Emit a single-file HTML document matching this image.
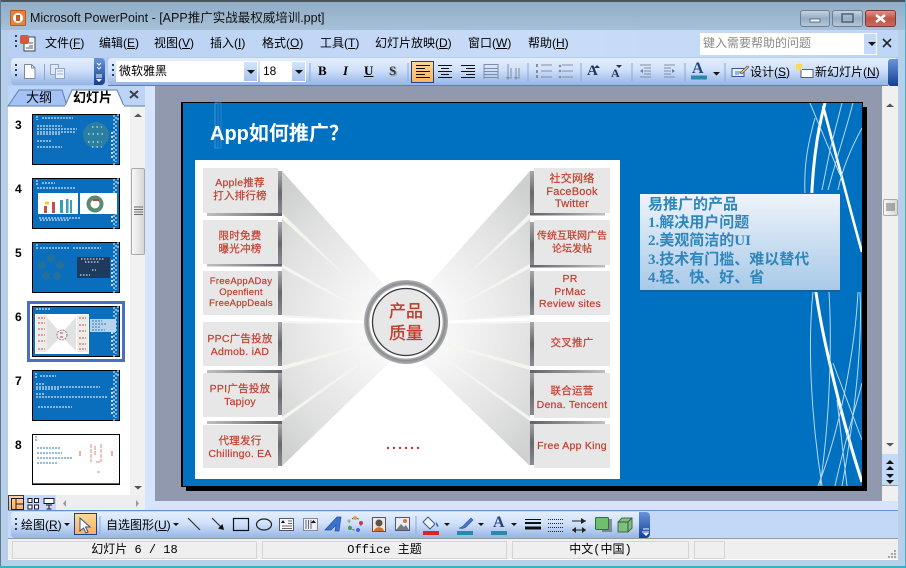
<!DOCTYPE html>
<html><head><meta charset="utf-8">
<style>
html,body{margin:0;padding:0;width:906px;height:568px;overflow:hidden;background:#b7cfe8}
*{box-sizing:border-box}
#r{position:relative;width:906px;height:568px;overflow:hidden;font-family:"Liberation Sans","Noto Sans CJK SC",sans-serif;font-size:12px;color:#000}
.a{position:absolute}
.t{position:absolute;white-space:nowrap;line-height:14px}
.m{position:absolute;top:36px;white-space:nowrap;line-height:14px;font-size:12px}
.rt{position:absolute;color:#c23e2e;text-align:center;white-space:nowrap;font-size:10.5px;line-height:12.6px;width:80px;letter-spacing:.25px;-webkit-text-stroke:.2px #c23e2e}
.st{position:absolute;background:#efefef;border:1px solid #d5d5d5;top:541px;height:18px;font-family:"Liberation Mono","Noto Sans CJK SC",monospace;font-size:12px;text-align:center;line-height:16px}
</style></head><body><div id="r">
<div class="a" style="left:0;top:0;width:906px;height:30px;background:linear-gradient(#8fabc6,#a6c0d7)"></div>
<div class="a" style="left:0;top:0;width:906px;height:2px;background:#4a5560"></div>
<div class="a" style="left:0;top:30px;width:8px;height:530px;background:#b7cfe8"></div>
<div class="a" style="left:0;top:0;width:1px;height:568px;background:#5f7a90"></div>
<div class="a" style="left:898px;top:30px;width:8px;height:530px;background:#b7cfe8"></div>
<div class="a" style="left:905px;top:0;width:1px;height:568px;background:#45b0c8"></div>
<div class="a" style="left:8px;top:30px;width:890px;height:27px;background:linear-gradient(90deg,#b8d0f2,#c9dcf8 60%,#c0d6f6)"></div>
<div class="a" style="left:8px;top:57px;width:890px;height:29px;background:#b3ccef"></div>
<div class="a" style="left:11px;top:58px;width:94px;height:27px;border-radius:4px;background:linear-gradient(#e4effd,#cfe0f9 45%,#95b4e4)"></div>
<div class="a" style="left:108px;top:58px;width:790px;height:27px;border-radius:4px;background:linear-gradient(#e4effd,#cfe0f9 45%,#95b4e4)"></div>
<div class="a" style="left:94px;top:58px;width:11px;height:27px;border-radius:0 4px 4px 0;background:linear-gradient(#6a95d8,#143f96)"></div>
<div class="a" style="left:888px;top:59px;width:10px;height:27px;border-radius:3px 0 0 3px;background:linear-gradient(#6a95d8,#143f96)"></div>
<div class="a" style="left:108px;top:85px;width:780px;height:1px;background:#5d7fb5"></div>
<!-- combos -->
<div class="a" style="left:116px;top:61px;width:142px;height:21px;background:#fff"></div>
<div class="a" style="left:244px;top:62px;width:13px;height:19px;background:linear-gradient(#d5e4f9,#a7c3ec)"></div>
<div class="a" style="left:260px;top:61px;width:46px;height:21px;background:#fff"></div>
<div class="a" style="left:292px;top:62px;width:13px;height:19px;background:linear-gradient(#d5e4f9,#a7c3ec)"></div>
<div class="a" style="left:411px;top:61px;width:23px;height:22px;background:linear-gradient(#ffd79a,#f9b25f);border:1px solid #1b3f8f"></div>
<!-- help box -->
<div class="a" style="left:700px;top:33px;width:177px;height:22px;background:#fff"></div>
<div class="a" style="left:864px;top:34px;width:12px;height:20px;background:#c4daf8"></div>
<!-- workspace -->
<div class="a" style="left:155px;top:86px;width:727px;height:415px;background:#9099ad"></div>
<div class="a" style="left:145px;top:86px;width:10px;height:424px;background:#d6e5fb"></div>
<div class="a" style="left:155px;top:501px;width:743px;height:9px;background:#d6e5fb"></div>
<div class="a" style="left:882px;top:86px;width:16px;height:415px;background:#f0f0f0"></div>
<div class="a" style="left:882px;top:454px;width:16px;height:32px;background:#c4daf8;border-bottom:1px solid #7f9fd5"></div>
<div class="a" style="left:883px;top:199px;width:15px;height:17px;border:1px solid #a9a9a9;border-radius:2px;background:linear-gradient(90deg,#f7f7f7,#d8d8d8)"></div>
<!-- left pane -->
<div class="a" style="left:8px;top:86px;width:137px;height:21px;background:#bcd5f6"></div>
<div class="a" style="left:8px;top:106px;width:122px;height:389px;background:#fff"></div>
<div class="a" style="left:130px;top:106px;width:15px;height:389px;background:#f1f1f1"></div>
<div class="a" style="left:131px;top:168px;width:14px;height:87px;border:1px solid #a9a9a9;border-radius:2px;background:linear-gradient(90deg,#f8f8f8,#d6d6d6)"></div>
<div class="a" style="left:8px;top:495px;width:48px;height:15px;background:#c4daf8"></div>
<div class="a" style="left:56px;top:495px;width:89px;height:15px;background:#eeeeee"></div>
<div class="a" style="left:8px;top:495px;width:16px;height:16px;background:linear-gradient(#ffd79a,#f9b25f);border:1px solid #1b3f8f"></div>
<!-- draw toolbar -->
<div class="a" style="left:8px;top:510px;width:890px;height:1px;background:#6a90d4"></div>
<div class="a" style="left:8px;top:511px;width:890px;height:27px;background:#c3d8f7"></div>
<div class="a" style="left:11px;top:512px;width:639px;height:26px;border-radius:4px;background:linear-gradient(#e4effd,#cfe0f9 45%,#95b4e4)"></div>
<div class="a" style="left:639px;top:512px;width:11px;height:26px;border-radius:0 4px 4px 0;background:linear-gradient(#6a95d8,#143f96)"></div>
<div class="a" style="left:74px;top:513px;width:23px;height:22px;background:linear-gradient(#ffd79a,#f9b25f);border:1px solid #1b3f8f"></div>
<!-- status -->
<div class="a" style="left:8px;top:538px;width:890px;height:22px;background:#efefef;border-top:1px solid #9a9a9a"></div>
<div class="a" style="left:8px;top:559px;width:890px;height:1px;background:#fff"></div>
<div class="a" style="left:0;top:566px;width:906px;height:2px;background:#38b0c8"></div>
<div class="st" style="left:12px;width:245px">幻灯片 6 / 18</div>
<div class="st" style="left:262px;width:245px">Office 主题</div>
<div class="st" style="left:512px;width:177px">中文(中国)</div>
<div class="st" style="left:694px;width:31px"></div>

<!-- window buttons -->
<div class="a" style="left:800px;top:10px;width:30px;height:17px;border:1px solid #6f7f90;border-radius:3px;background:linear-gradient(#c4d3e2,#96adc4 50%,#b3c8da)"></div>
<div class="a" style="left:832px;top:10px;width:31px;height:17px;border:1px solid #6f7f90;border-radius:3px;background:linear-gradient(#c4d3e2,#96adc4 50%,#b3c8da)"></div>
<div class="a" style="left:865px;top:10px;width:31px;height:17px;border:1px solid #7a3a35;border-radius:3px;background:linear-gradient(#dd9488,#bd5548 50%,#cb6a5c)"></div>

<!-- SLIDE -->
<div class="a" style="left:186px;top:107px;width:681px;height:384px;background:#000"></div>
<div class="a" style="left:181px;top:102px;width:682px;height:385px;background:#0070c0;border:1px solid #000;border-width:1px 1px 1px 2px"></div>

<svg class="a" style="left:0;top:0" width="906" height="568" viewBox="0 0 906 568" fill="none">
<defs>
<clipPath id="sc"><rect x="183" y="103" width="679" height="383"/></clipPath>
<radialGradient id="bm" gradientUnits="userSpaceOnUse" cx="406" cy="322" r="180">
<stop offset=".25" stop-color="#f7f7f7"/><stop offset=".7" stop-color="#e2e2e2"/><stop offset="1" stop-color="#cdd0cf"/></radialGradient>
<radialGradient id="rg" cx=".5" cy=".5" r=".5"><stop offset=".84" stop-color="#d5d5d5"/><stop offset=".92" stop-color="#8a8c90"/><stop offset="1" stop-color="#b0b2b5"/></radialGradient>
<linearGradient id="sl" x1="0" x2="0" y1="0" y2="1"><stop offset="0" stop-color="#a8a8ac"/><stop offset=".5" stop-color="#68686e"/><stop offset="1" stop-color="#8a8a90"/></linearGradient>
<linearGradient id="bn" x1="0" x2="1" y1="0" y2="0"><stop offset="0" stop-color="#c0c0c0"/><stop offset="1" stop-color="#60626a"/></linearGradient>
<linearGradient id="bn2" x1="1" x2="0" y1="0" y2="0"><stop offset="0" stop-color="#c0c0c0"/><stop offset="1" stop-color="#60626a"/></linearGradient>
<g id="swt" stroke="#fff" stroke-width="1" stroke-dasharray="2 2">
<path d="M114 1V51M116 3V48"/><path d="M112 18V46" stroke-width="1.5"/><path d="M118 0V8"/>
</g>
</defs>
<g clip-path="url(#sc)" stroke="#fff">
<path d="M825 103C812 150 807 220 815 285C822 340 845 430 862 482" stroke-width="3"/>
<path d="M823 106C835 150 850 210 862 252" stroke-width="2.6"/>
<g stroke="#b8d8f0" stroke-width="1">
<path d="M810 103L840 175"/><path d="M842 103L830 150L822 190"/><path d="M853 103C846 130 836 160 828 190"/>
<path d="M815 118C806 150 804 170 805 195"/><path d="M862 128C850 150 842 170 838 190"/>
<path d="M813 292C808 340 810 410 822 486"/><path d="M829 292C832 340 830 420 820 486"/>
<path d="M858 292C855 350 840 430 818 486"/><path d="M833 363L862 440"/><path d="M835 486C845 440 855 410 862 383"/>
<path d="M847 486C843 450 840 425 837 400"/><path d="M860 292C862 330 858 400 842 486"/>
</g></g>
<rect x="215" y="103" width="3" height="45" stroke="#4a94d2"/><rect x="218" y="103" width="3" height="45" stroke="#2b84cc"/>
<rect x="195" y="160" width="425" height="319" fill="#fff"/>
<!-- fans -->
<path d="M282 171V466L406 322ZM530 171V466L406 322Z" fill="#f5f5f0"/>
<g fill="url(#bm)">
<path d="M282 171L282 213L370 300L385 286Z"/><path d="M282 219L282 264L366 312L371 299Z"/>
<path d="M282 268L282 315L364 320L366 313Z"/><path d="M282 323L282 366L370 342L364 325Z"/>
<path d="M282 370L282 417L376 351L371 344Z"/><path d="M282 421L282 466L390 362L377 352Z"/>
<path d="M530 171L530 213L442 300L427 286Z"/><path d="M530 219L530 264L446 312L441 299Z"/>
<path d="M530 268L530 315L448 320L446 313Z"/><path d="M530 323L530 366L442 342L448 325Z"/>
<path d="M530 370L530 417L436 351L441 344Z"/><path d="M530 421L530 466L422 362L435 352Z"/>
</g>
<path d="M282 319L365 322M530 319L447 322" stroke="#fff" stroke-width="3"/>
<!-- strips -->
<g fill="url(#sl)">
<rect x="278" y="171" width="4" height="44"/><rect x="278" y="222" width="4" height="42"/><rect x="278" y="271" width="4" height="44"/><rect x="278" y="322" width="4" height="44"/><rect x="278" y="373" width="4" height="42"/><rect x="278" y="423" width="4" height="43"/>
<rect x="530" y="171" width="4" height="44"/><rect x="530" y="222" width="4" height="45"/><rect x="530" y="271" width="4" height="44"/><rect x="530" y="322" width="4" height="44"/><rect x="530" y="371" width="4" height="44"/><rect x="530" y="421" width="4" height="44"/>
</g>
<g fill="url(#bn)"><rect x="207" y="213" width="75" height="3"/><rect x="207" y="264" width="75" height="2.500"/><rect x="207" y="370" width="75" height="3"/><rect x="207" y="421" width="75" height="3"/></g>
<g fill="url(#bn2)"><rect x="530" y="213" width="75" height="2.500"/><rect x="530" y="265" width="75" height="2.500"/><rect x="530" y="370" width="75" height="3"/><rect x="530" y="421" width="75" height="3"/></g>
<g fill="#e7e7e7">
<rect x="203" y="168" width="75" height="45"/><rect x="203" y="220" width="75" height="44"/><rect x="203" y="271" width="75" height="44"/><rect x="203" y="322" width="75" height="44"/><rect x="203" y="373" width="75" height="44"/><rect x="203" y="425" width="75" height="43"/>
<rect x="534" y="168" width="76" height="45"/><rect x="534" y="220" width="76" height="45"/><rect x="534" y="271" width="76" height="44"/><rect x="534" y="322" width="76" height="44"/><rect x="534" y="373" width="76" height="45"/><rect x="534" y="424" width="76" height="44"/>
</g>
<!-- centre -->
<circle cx="406" cy="322" r="42" fill="url(#rg)"/>
<circle cx="406" cy="322" r="36.500" fill="#fff"/>
<circle cx="406" cy="322" r="33.500" fill="#e7e7e7" stroke="#3a3a3e" stroke-width="1.300"/>
<g fill="#c0392b"><circle cx="388" cy="448" r="1.200"/><circle cx="394" cy="448" r="1.200"/><circle cx="400" cy="448" r="1.200"/><circle cx="406" cy="448" r="1.200"/><circle cx="412" cy="448" r="1.200"/><circle cx="418" cy="448" r="1.200"/></g>
<!-- textbox shadow -->
<rect x="640" y="193" width="200" height="99" fill="#1a5f95"/>

<!-- thumbs -->
<rect x="28.500" y="302.500" width="95" height="58" fill="none" stroke="#4a70c0" stroke-width="3"/>
<g stroke="#000">
<rect x="32.500" y="114.500" width="87" height="50" fill="#0a6ebc"/>
<rect x="32.500" y="178.500" width="87" height="50" fill="#0a6ebc"/>
<rect x="32.500" y="242.500" width="87" height="50" fill="#0a6ebc"/>
<rect x="32.500" y="306.500" width="87" height="50" fill="#0a6ebc"/>
<rect x="32.500" y="370.500" width="87" height="50" fill="#0a6ebc"/>
<rect x="32.500" y="434.500" width="87" height="50" fill="#fff"/>
</g>
<use href="#swt" y="114"/><use href="#swt" y="178"/><use href="#swt" y="242"/><use href="#swt" y="306"/><use href="#swt" y="370"/>
<path d="M114 436V482M116 438V480" stroke="#ececec" stroke-dasharray="2 2"/>
<!-- thumb 3 -->
<g stroke="#fff" stroke-width="1" stroke-dasharray="2 1">
<path d="M37 116V120M42 118H73M37 126H62M37 129H77M37 132H75M37 134H60M37 141H52M37 147H62"/>
</g>
<circle cx="96" cy="135" r="13" fill="#2a7ea0"/>
<path d="M88 134h16M92 127h10M88 142h14M92 147h10" stroke="#fff" stroke-dasharray="1.500 3"/>
<!-- thumb 4 -->
<path d="M37 180V185M42 183H55M37 188H76M39 218H80M40 220H70" stroke="#fff" stroke-dasharray="2 1"/>
<rect x="38" y="193" width="40" height="21" fill="#fff"/><rect x="80" y="193" width="37" height="21" fill="#fff"/>
<path d="M45 203h4" stroke="#f0d020" stroke-width="3"/>
<rect x="44" y="206" width="3" height="7" fill="#c0504d"/><rect x="52" y="202" width="3" height="11" fill="#c0504d"/><rect x="60" y="200" width="3" height="13" fill="#3aa0b5"/><rect x="66" y="199" width="2.500" height="14" fill="#3aa0b5"/><rect x="70" y="200" width="2" height="13" fill="#3aa0b5"/>
<circle cx="95" cy="204" r="6.500" stroke="#5a8a70" stroke-width="4"/><circle cx="95" cy="204" r="2" fill="#fff"/><path d="M93 200h6" stroke="#c04040" stroke-width="2"/>
<!-- thumb 5 -->
<path d="M37 244V249M40 248H70M73 248H101" stroke="#fff" stroke-dasharray="2 1"/>
<circle cx="51" cy="258" r="4" fill="#24709a"/><circle cx="42" cy="265" r="4" fill="#24709a"/><circle cx="60" cy="265" r="4" fill="#24709a"/><circle cx="46" cy="276" r="4" fill="#24709a"/><circle cx="57" cy="276" r="4" fill="#24709a"/>
<rect x="77" y="257" width="33" height="21" fill="#1e3a5c"/>
<path d="M81 259H104M85 262H100M92 270H96M80 275H90" stroke="#fff" stroke-dasharray="1.500 1.500"/>
<!-- thumb 6 -->
<path d="M36 309H50" stroke="#fff" stroke-dasharray="2 1"/>
<rect x="35" y="314" width="54" height="40" fill="#fff"/>
<path d="M47 317V351L62 335ZM76 317V351L60 335Z" fill="#e2e2e2"/>
<g fill="#ececec"><rect x="36" y="315" width="11" height="37"/><rect x="77" y="315" width="11" height="37"/></g>
<g stroke="#d27060" stroke-dasharray="2 1" stroke-width="1.200"><path d="M38 318H45M38 323H45M38 329H45M38 335H45M38 341H45M38 349H45M79 318H86M79 325H86M79 331H86M79 338H86M79 344H86M79 349H86"/></g>
<circle cx="62" cy="335" r="5" fill="#eee" stroke="#888" stroke-dasharray="2 1"/><path d="M60 333h3M60 337h3" stroke="#c04040"/>
<rect x="90" y="319" width="26" height="13" fill="#b8d4ec"/><path d="M92 321H102M92 324H106M92 327H100M92 330H105" stroke="#2a7db0" stroke-dasharray="2 1"/>
<!-- thumb 7 -->
<path d="M36 373V379M40 376H56M36 384H44M36 387H100M36 389H60M36 394H45M36 397H108M38 407H72" stroke="#fff" stroke-dasharray="2 1"/>
<!-- thumb 8 -->
<rect x="33" y="483" width="86" height="1" fill="#0a6ebc"/>
<path d="M36 436V441M37 448H60M37 453H62M37 458H72M37 463H58" stroke="#2a7db0" stroke-dasharray="2 1"/>
<path d="M91 444V462M95 446V456M101 444V462M96 462H100M97 472H100" stroke="#e8b0aa" stroke-width="1.500" stroke-dasharray="4 1"/>
<path d="M80 451V456M112 451V456" stroke="#d06050"/>
<!-- title icon -->
<rect x="10.500" y="10.500" width="15" height="15" rx="1" fill="#e9823f" stroke="#b85a20"/>
<circle cx="18" cy="18" r="5" fill="#fff"/><path d="M16 15h4v6h-4z" fill="#c85a1e"/>
<!-- window buttons -->
<rect x="810" y="19" width="10" height="3" fill="#f4f8fb" stroke="#455a70" stroke-width=".8"/>
<rect x="842" y="14" width="11" height="8" fill="none" stroke="#455a70" stroke-width="1.400"/>
<path d="M876 15L885 22M885 15L876 22" stroke="#fff" stroke-width="2.600"/>
<!-- grips -->
<g fill="#27416e">
<rect x="15" y="35" width="2" height="2"/><rect x="15" y="40" width="2" height="2"/><rect x="15" y="45" width="2" height="2"/>
<rect x="15" y="64" width="2" height="2"/><rect x="15" y="69" width="2" height="2"/><rect x="15" y="74" width="2" height="2"/>
<rect x="112" y="64" width="2" height="2"/><rect x="112" y="69" width="2" height="2"/><rect x="112" y="74" width="2" height="2"/>
<rect x="15" y="518" width="2" height="2"/><rect x="15" y="523" width="2" height="2"/><rect x="15" y="528" width="2" height="2"/>
</g>
<!-- menu doc icon -->
<path d="M24 37h11v14H24z" fill="#f3f5f8" stroke="#3c4450"/><rect x="20" y="35" width="9" height="9" rx="2" fill="#d9573a"/><path d="M29 43h4M29 46h4M26 48h7" stroke="#5a6470"/>
<!-- std icons -->
<path d="M24.500 64.500h7l3.500 3.500V78.500H24.500z" fill="#fff" stroke="#7d8aa0"/><path d="M31.500 64.500V68H35" stroke="#7d8aa0"/>
<path d="M44.500 64V80" stroke="#90a8cc"/><path d="M50.500 64.500h8v10h-8z" fill="#dfe8f5" stroke="#90a6c6"/><path d="M55.500 68.500h9v10h-9z" fill="#eaf1fb" stroke="#90a6c6"/><path d="M57 71h6M57 74h6" stroke="#9db3d2"/>
<path d="M97 63l2 2 2-2M97 67l2 2 2-2" stroke="#fff" stroke-width="1"/><path d="M96 75h6M96 77h6" stroke="#fff"/><path d="M96 79h6l-3 3z" fill="#fff"/>
<!-- arrows -->
<g fill="#111">
<path d="M247 70h8l-4 4zM295 70h8l-4 4zM868 42h8l-4 4zM713 72h7l-3.500 3.500zM64 523h6l-3 3zM173 523h6l-3 3zM444 523h6l-3 3zM478 523h6l-3 3zM511 523h6l-3 3z"/>
</g>
<path d="M883 39l8 8M891 39l-8 8" stroke="#222" stroke-width="1.600"/>
<!-- separators -->
<g stroke="#8ca8d0"><path d="M310 63V81M408 63V81M528 63V81M581 63V81M632 63V81M685 63V81M725 63V81M100 516V534M416 516V534"/></g>
<!-- tabs -->
<path d="M8 106L19 90H62L67 106Z" fill="#a5c2f4" stroke="#5a7fb0"/>
<path d="M65 106L72 90H117L124 106Z" fill="#fff" stroke="#5a7fb0"/>
<path d="M65 106H124" stroke="#fff" stroke-width="1.400"/>
<path d="M124 106H145" stroke="#5a7fb0"/>
<path d="M130 91l8 7M138 91l-8 7" stroke="#3a3f48" stroke-width="2"/>
<!-- align icons -->
<path d="M416 65.500h14M416 68.500h9M416 71.500h14M416 74.500h9M416 77.500h14" stroke="#111"/>
<path d="M438 65.500h14M441 68.500h8M438 71.500h14M441 74.500h8M438 77.500h14" stroke="#111"/>
<path d="M461 65.500h14M466 68.500h9M461 71.500h14M466 74.500h9M461 77.500h14" stroke="#111"/>
<path d="M484 64.500h14M484 68.500h14M484 71.500h14M484 74.500h14M484 77.500h14" stroke="#7e8ea4"/>
<path d="M484 64V79M498 64V79" stroke="#7e8ea4"/>
<path d="M508 64V79M511 68V79M516 68V79M519 68V79" stroke="#7e8ea4"/><path d="M506 77h4l-2 3zM514 77h4l-2 3z" fill="#7e8ea4"/>
<!-- lists -->
<path d="M541 65h11M541 71h11M541 77h11M562 65h11M562 71h11M562 77h11" stroke="#7e8ea4"/>
<path d="M536 64h2v3h-2zM536 70h2v3h-2zM536 75h2v3h-2z" fill="#7e8ea4"/>
<circle cx="560" cy="66" r="1.300" fill="#7e8ea4"/><circle cx="560" cy="71" r="1.300" fill="#7e8ea4"/><circle cx="560" cy="77" r="1.300" fill="#7e8ea4"/>
<path d="M597 65l3 3h-6zM619 68l3-3h-6z" fill="#20335a"/>
<path d="M640 65h11M644 68h7M644 71h7M644 74h7M640 77h11" stroke="#7e8ea4"/><path d="M643 69l-3 2 3 2z" fill="#5a7fb0"/>
<path d="M664 65h11M664 68h7M664 71h7M664 74h7M664 77h11" stroke="#7e8ea4"/><path d="M672 69l3 2-3 2z" fill="#5a7fb0"/>
<rect x="691" y="75.500" width="16" height="4" fill="#2a88aa"/>
<!-- design -->
<path d="M732 68.500h12v8h-12z" fill="#e8f0fb" stroke="#2f5a9a"/><path d="M735 72h6M735 74h4" stroke="#4a78ba"/><path d="M740 73l7-7 2 1-7 7z" fill="#f0c060" stroke="#405070" stroke-width=".6"/>
<path d="M801 69.500h12v8h-12z" fill="#fff" stroke="#50607a"/><path d="M796 64h6v6h-6z" fill="#f5dc5a"/><path d="M799 62v10M794 67h10" stroke="#f5dc5a" stroke-dasharray="1 1"/>
<!-- left view buttons -->
<path d="M11.500 498.500h12v11h-12zM16 499v10M16.500 504h7" stroke="#1a1a2a" fill="none"/>
<path d="M28 498.500h4v4h-4zM34.500 498.500h4v4h-4zM28 505h4v4h-4zM34.500 505h4v4h-4z" stroke="#1a1a2a" fill="#fff"/>
<path d="M44 498.500h10v5h-10z" stroke="#1a1a2a" fill="#fff"/><path d="M46 505h6M49 505v4M46.500 509h5" stroke="#1a1a2a"/>
<path d="M66 500v7l-3-3.500zM136 500v7l3-3.500z" fill="#9a9a9a"/>
<!-- scroll arrows & grips -->
<path d="M134 117l4-3.500 4 3.500zM134 486l4 3.500 4-3.500zM886 107l4-3.500 4 3.500zM886 443l4 3.500 4-3.500z" fill="#555"/>
<path d="M134 207h9M134 209.500h9M134 212h9M134 214.500h9" stroke="#6a6a6a" stroke-width=".9"/>
<path d="M886 204h9M886 206h9M886 208h9M886 210h9" stroke="#6a6a6a" stroke-width=".9"/>
<path d="M886 464l4-4 4 4zM886 470l4-4 4 4zM886 474h8l-4 4zM886 480h8l-4 4z" fill="#111"/>
<!-- drawing icons -->
<path d="M80 518V531L83.500 528 86 533 88 532 85.500 527 90 527Z" fill="#fff" stroke="#31548a"/>
<path d="M188 518L200 530" stroke="#333" stroke-width="1.200"/><path d="M212 518L222 528" stroke="#333" stroke-width="1.200"/><path d="M224 530l-6-1.500 4.500-4.500z" fill="#111"/>
<rect x="233.500" y="518.500" width="15" height="12" fill="none" stroke="#111" stroke-width="1.200"/>
<ellipse cx="264" cy="524.500" rx="7.500" ry="5.500" stroke="#222" stroke-width="1.200"/>
<rect x="279.500" y="518.500" width="14" height="12" fill="#f8f8f8" stroke="#556"/><path d="M288 521h4M288 523.500h4M282 526h10M282 528.500h10" stroke="#667"/><path d="M281 523l2-3 2 3z" fill="#111"/>
<rect x="303.500" y="518.500" width="14" height="12" fill="#ecf1f8" stroke="#889"/><path d="M306 520v9M308.500 520v9M311 520v9" stroke="#667"/><path d="M311 523l2.500-3 2.500 3z" fill="#111"/>
<path d="M325 530L337 517 341 517 339 531 335 531 336 525 331 530Z" fill="#3c72d0" stroke="#244f9c" stroke-width=".7"/>
<circle cx="355" cy="524" r="6" stroke="#556" stroke-dasharray="2 3"/><circle cx="355" cy="518" r="2" fill="#e6a23c"/><circle cx="361" cy="523" r="2" fill="#c83c3c"/><circle cx="358" cy="530" r="2" fill="#4468c8"/><circle cx="350" cy="528" r="2" fill="#4a9a50"/><circle cx="349" cy="521" r="1.600" fill="#aaa"/>
<rect x="372.500" y="517.500" width="13" height="14" fill="#f2e8d8" stroke="#556"/><circle cx="379" cy="523" r="3.500" fill="#555"/><path d="M374 531c1-5 9-5 10 0z" fill="#d07030"/>
<rect x="395.500" y="517.500" width="14" height="13" fill="#e8eef6" stroke="#556"/><path d="M396 530l5-6 3 3 2-2 3 5z" fill="#6f7c8c"/><circle cx="405" cy="521" r="2" fill="#e07040"/>
<path d="M428 517l7 7-5 5-7-7z" fill="#eef3fa" stroke="#405a80"/><path d="M436 522c2 2 3 4 2 5-2-1-2-3-2-5z" fill="#2a6ac0"/><rect x="423" y="531" width="16" height="4" fill="#e02030"/>
<path d="M459 528c3 0 4-2 6-4l6-6 2 2-6 6c-2 2-5 3-8 2z" fill="#4a78d0" stroke="#2f4f90" stroke-width=".6"/><rect x="457" y="531" width="16" height="4" fill="#2a88aa"/>
<rect x="491" y="531" width="16" height="4" fill="#2a88aa"/>
<path d="M525 519.500h16" stroke="#111"/><path d="M525 523h16" stroke="#111" stroke-width="2"/><path d="M525 528h16" stroke="#111" stroke-width="3"/>
<path d="M548 519.500h15M548 523.500h15M548 527.500h15M548 531.500h15" stroke="#222" stroke-dasharray="1 1"/>
<path d="M572 521h14M572 530h14" stroke="#222"/><path d="M581 518l5 3-5 3zM576 527l-4 3 4 3zM582 527l4 3-4 3z" fill="#222"/>
<rect x="602" y="519" width="10" height="13" fill="#656a72" opacity=".7"/><rect x="595.500" y="517.500" width="13" height="12" rx="1" fill="#6fbf6f" stroke="#2f7040"/>
<path d="M618 522l4-4h10v10l-4 4h-10z" fill="#7fbf7f" stroke="#4a6a4a"/><path d="M618 522h10v10M628 522l4-4" stroke="#3a5a3a" fill="none"/>
<path d="M643 529h6M642 532h7" stroke="#fff"/><path d="M643 533h6l-3 3z" fill="#fff"/>
<!-- resize grip -->
<g fill="#a8a8a8"><rect x="894" y="550" width="2" height="2"/><rect x="894" y="553" width="2" height="2"/><rect x="894" y="556" width="2" height="2"/><rect x="891" y="553" width="2" height="2"/><rect x="891" y="556" width="2" height="2"/><rect x="888" y="556" width="2" height="2"/></g>
</svg>

<!-- text box -->
<div class="a" style="left:640px;top:193px;width:200px;height:97px;background:linear-gradient(#eef4fb,#a8c9e8);border-top:1px solid #1a6a9a"></div>
<div class="a" style="left:648px;top:196px;width:190px;font:bold 15px/18.2px 'Liberation Serif','Noto Sans CJK SC',sans-serif;color:#2f86ba;white-space:nowrap">易推广的产品<br>1.解决用户问题<br>2.美观简洁的UI<br>3.技术有门槛、难以替代<br>4.轻、快、好、省</div>

<div class="t" style="left:210px;top:122px;font-size:20px;line-height:24px;font-weight:bold;color:#fff">App如何推广？</div>

<div class="rt" style="left:200px;top:177px">Apple推荐<br>打入排行榜</div>
<div class="rt" style="left:200px;top:230px">限时免费<br>曝光冲榜</div>
<div class="rt" style="left:201px;top:277px;font-size:9.500px;line-height:10.800px">FreeAppADay<br>Openfient<br>FreeAppDeals</div>
<div class="rt" style="left:200px;top:333px">PPC广告投放<br>Admob. iAD</div>
<div class="rt" style="left:200px;top:383px">PPI广告投放<br>Tapjoy</div>
<div class="rt" style="left:200px;top:435px">代理发行<br>Chillingo. EA</div>
<div class="rt" style="left:532px;top:173px;font-size:11px">社交网络<br>FaceBook<br>Twitter</div>
<div class="rt" style="left:532px;top:231px;font-size:10px;letter-spacing:0">传统互联网广告<br>论坛发帖</div>
<div class="rt" style="left:530px;top:273px">PR<br>PrMac<br>Review sites</div>
<div class="rt" style="left:532px;top:337px">交叉推广</div>
<div class="rt" style="left:532px;top:384px;line-height:14px">联合运营<br>Dena. Tencent</div>
<div class="rt" style="left:532px;top:440px">Free App King</div>
<div class="t" style="left:366px;top:301px;width:80px;text-align:center;font-size:17px;line-height:22px;color:#c0392b;-webkit-text-stroke:.3px #c0392b">产品<br>质量</div>

<!-- thumb numbers -->
<div class="t" style="left:15px;top:118px;font-weight:bold;font-size:12px">3</div>
<div class="t" style="left:15px;top:182px;font-weight:bold;font-size:12px">4</div>
<div class="t" style="left:15px;top:246px;font-weight:bold;font-size:12px">5</div>
<div class="t" style="left:15px;top:310px;font-weight:bold;font-size:12px">6</div>
<div class="t" style="left:15px;top:374px;font-weight:bold;font-size:12px">7</div>
<div class="t" style="left:15px;top:438px;font-weight:bold;font-size:12px">8</div>

<!-- tabs text -->
<div class="t" style="left:26px;top:91px;font-size:13px">大纲</div>
<div class="t" style="left:73px;top:91px;font-size:13px;font-weight:bold">幻灯片</div>

<!-- title -->
<div class="t" style="left:30px;top:11px;font-size:12.500px;color:#111">Microsoft PowerPoint - [APP推广实战最权威培训.ppt]</div>
<!-- menus -->
<div class="m" style="left:45px">文件(<u>F</u>)</div>
<div class="m" style="left:99px">编辑(<u>E</u>)</div>
<div class="m" style="left:154px">视图(<u>V</u>)</div>
<div class="m" style="left:210px">插入(<u>I</u>)</div>
<div class="m" style="left:262px">格式(<u>O</u>)</div>
<div class="m" style="left:320px">工具(<u>T</u>)</div>
<div class="m" style="left:375px">幻灯片放映(<u>D</u>)</div>
<div class="m" style="left:468px">窗口(<u>W</u>)</div>
<div class="m" style="left:528px">帮助(<u>H</u>)</div>
<div class="t" style="left:703px;top:36px;color:#8a8a8a">键入需要帮助的问题</div>
<!-- std toolbar text -->
<div class="t" style="left:119px;top:64px">微软雅黑</div>
<div class="t" style="left:263px;top:64px">18</div>
<div class="t" style="left:318px;top:64px;font:bold 13px/14px 'Liberation Serif',serif">B</div>
<div class="t" style="left:343px;top:64px;font:bold italic 13px/14px 'Liberation Serif',serif">I</div>
<div class="t" style="left:364px;top:64px;font:bold 13px/14px 'Liberation Serif',serif;text-decoration:underline">U</div>
<div class="t" style="left:389px;top:64px;font:bold 13px/14px 'Liberation Serif',serif;color:#333;text-shadow:1px 1px 1px #888">S</div>
<div class="t" style="left:587px;top:63px;font:bold 15px/16px 'Liberation Serif',serif;color:#20335a">A</div>
<div class="t" style="left:611px;top:66px;font:bold 12px/14px 'Liberation Serif',serif;color:#20335a">A</div>
<div class="t" style="left:692px;top:61px;font:bold 16px/16px 'Liberation Serif',serif;color:#26457e">A</div>
<div class="t" style="left:750px;top:65px">设计(<u>S</u>)</div>
<div class="t" style="left:815px;top:65px">新幻灯片(<u>N</u>)</div>
<!-- draw toolbar -->
<div class="t" style="left:21px;top:518px">绘图(<u>R</u>)</div>
<div class="t" style="left:106px;top:518px">自选图形(<u>U</u>)</div>
<div class="t" style="left:493px;top:515px;font:bold 16px/16px 'Liberation Serif',serif;color:#26457e">A</div>
</div></body></html>
